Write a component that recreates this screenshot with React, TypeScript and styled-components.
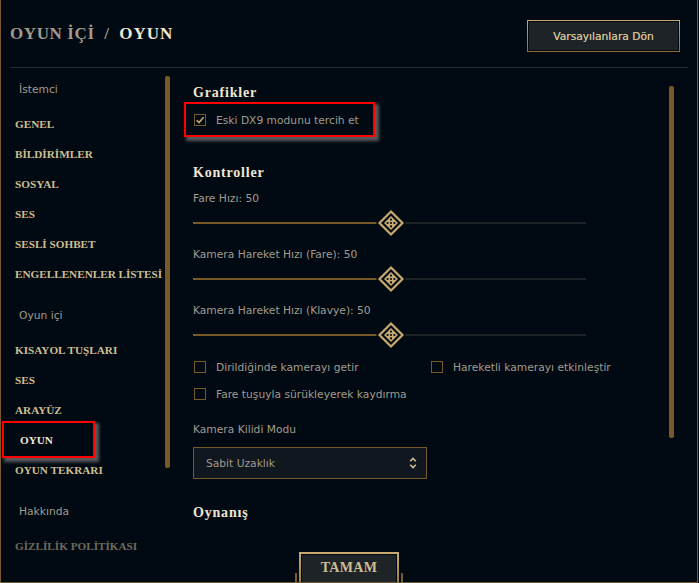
import React from "react";
import styled, { createGlobalStyle } from "styled-components";

const GOLD = "#785a28";
const GOLD_LIGHT = "#c8aa6e";
const BG = "#010a13";
const SERIF = `"Liberation Serif", "DejaVu Serif", serif`;
const SANS = `"DejaVu Sans", "Liberation Sans", sans-serif`;

const Global = createGlobalStyle`
  body {
    margin: 0;
    background: ${BG};
  }
`;

const navGroups = [
  {
    label: "İstemci",
    items: ["GENEL", "BİLDİRİMLER", "SOSYAL", "SES", "SESLİ SOHBET", "ENGELLENENLER LİSTESİ"],
  },
  {
    label: "Oyun içi",
    items: ["KISAYOL TUŞLARI", "SES", "ARAYÜZ", "OYUN", "OYUN TEKRARI"],
  },
  {
    label: "Hakkında",
    items: ["GİZLİLİK POLİTİKASI"],
  },
];

const sliders = [
  { label: "Fare Hızı", value: 50 },
  { label: "Kamera Hareket Hızı (Fare)", value: 50 },
  { label: "Kamera Hareket Hızı (Klavye)", value: 50 },
];

export default function App() {
  return (
    <Frame>
      <Global />
      <Header>
        <Title>
          OYUN İÇİ&nbsp;&nbsp;/&nbsp;&nbsp;<strong>OYUN</strong>
        </Title>
        <DefaultsButton>Varsayılanlara Dön</DefaultsButton>
      </Header>
      <Divider />
      <Body>
        <Nav>
          <NavList>
            {navGroups.map((g) => (
              <NavGroup key={g.label}>
                <GroupLabel>{g.label}</GroupLabel>
                {g.items.map((item) => {
                  const active = g.label === "Oyun içi" && item === "OYUN";
                  return (
                    <NavItem
                      key={item}
                      $active={active}
                      $dim={item === "GİZLİLİK POLİTİKASI"}
                    >
                      {item}
                      {active && <Highlight $left={-13} $top={-4} $w={93} $h={37} />}
                    </NavItem>
                  );
                })}
              </NavGroup>
            ))}
          </NavList>
          <ScrollThumb $top={8} $height={392} />
        </Nav>

        <Content>
          <Main>
            <SectionTitle>Grafikler</SectionTitle>
            <CheckRow style={{ marginTop: 7 }}>
              <Check checked />
              Eski DX9 modunu tercih et
              <Highlight $left={-9} $top={-8} $w={191} $h={35} />
            </CheckRow>

            <SectionTitle style={{ marginTop: 33 }}>Kontroller</SectionTitle>
            {sliders.map((s, i) => (
              <React.Fragment key={s.label}>
                <FieldLabel style={{ marginTop: i === 0 ? 8 : 14 }}>
                  {s.label}: {s.value}
                </FieldLabel>
                <Slider value={s.value} />
              </React.Fragment>
            ))}

            <CheckGrid>
              <CheckRow>
                <Check />
                Dirildiğinde kamerayı getir
              </CheckRow>
              <CheckRow>
                <Check />
                Hareketli kamerayı etkinleştir
              </CheckRow>
              <CheckRow>
                <Check />
                Fare tuşuyla sürükleyerek kaydırma
              </CheckRow>
            </CheckGrid>

            <FieldLabel style={{ marginTop: 18 }}>Kamera Kilidi Modu</FieldLabel>
            <Select>
              Sabit Uzaklık
              <svg width="8" height="14" viewBox="0 0 8 14">
                <path d="M1.2 5.2 L4 2.4 L6.8 5.2" stroke="#cdbe91" strokeWidth="1.6" fill="none" />
                <path d="M1.2 8.8 L4 11.6 L6.8 8.8" stroke="#cdbe91" strokeWidth="1.6" fill="none" />
              </svg>
            </Select>

            <SectionTitle style={{ marginTop: 24 }}>Oynanış</SectionTitle>
          </Main>
          <ScrollThumb $top={18} $height={352} $right={23} />
        </Content>
      </Body>
      <OkButton>TAMAM</OkButton>
    </Frame>
  );
}

function Check({ checked }: { checked?: boolean }) {
  return (
    <Box>
      {checked && (
        <svg width="10" height="10" viewBox="0 0 10 10">
          <path d="M1.6 5.2 L4 7.6 L8.6 2.2" stroke={GOLD_LIGHT} strokeWidth="1.6" fill="none" />
        </svg>
      )}
    </Box>
  );
}

function Slider({ value }: { value: number }) {
  const pct = value / 100;
  const center = Math.round(393 * pct) + 1;
  return (
    <Track style={{ backgroundImage: `linear-gradient(to right, ${GOLD} 0 ${center}px, #1e2328 ${center}px 100%)` }}>
      <Thumb style={{ left: center - 15 }}>
        <svg width="30" height="30" viewBox="0 0 30 30">
          <polygon points="15,0 30,15 15,30 0,15" fill={BG} />
          <polygon points="15,3.5 26.5,15 15,26.5 3.5,15" fill={BG} stroke={GOLD_LIGHT} strokeWidth="2.2" />
          <polygon points="15,8 22,15 15,22 8,15" fill={GOLD_LIGHT} />
          <circle cx="15" cy="11.6" r="1.1" fill={BG} />
          <circle cx="18.4" cy="15" r="1.1" fill={BG} />
          <circle cx="15" cy="18.4" r="1.1" fill={BG} />
          <circle cx="11.6" cy="15" r="1.1" fill={BG} />
          <circle cx="15" cy="15" r="1.1" fill={BG} />
        </svg>
      </Thumb>
    </Track>
  );
}

const Frame = styled.div`
  position: relative;
  width: 698px;
  height: 583px;
  box-sizing: border-box;
  border-left: 1px solid ${GOLD};
  border-right: 1px solid ${GOLD};
  border-bottom: 1px solid ${GOLD};
  background: ${BG};
  overflow: hidden;
  display: flex;
  flex-direction: column;
`;

const Header = styled.header`
  height: 67px;
  flex-shrink: 0;
  display: flex;
  align-items: center;
  justify-content: space-between;
  padding: 0 17px 0 9px;
`;

const Title = styled.h1`
  margin: 0;
  font-family: ${SERIF};
  font-weight: 700;
  font-size: 17px;
  letter-spacing: 0.6px;
  color: #a09b8c;

  strong {
    color: #f0e6d2;
    letter-spacing: 1px;
  }
`;

const DefaultsButton = styled.button`
  margin-top: 5px;
  width: 153px;
  height: 32px;
  box-sizing: border-box;
  border: 1px solid transparent;
  border-image: linear-gradient(${GOLD_LIGHT}, #8a6c36) 1;
  box-shadow: inset 0 0 0 1px ${BG};
  background: #1e2328;
  color: #cdbe91;
  font-family: ${SANS};
  font-size: 10.7px;
  text-shadow: 0 0 0.6px #cdbe91;
  padding: 0;
`;

const Divider = styled.div`
  height: 1px;
  margin: 0 9px;
  background: #252b33;
  flex-shrink: 0;
`;

const Body = styled.div`
  flex: 1;
  display: flex;
  min-height: 0;
`;

const Nav = styled.nav`
  width: 179px;
  flex-shrink: 0;
  display: flex;
`;

const NavList = styled.div`
  width: 150px;
  padding: 7px 0 0 14px;
  display: flex;
  flex-direction: column;
  gap: 12px;
`;

const NavGroup = styled.div`
  display: flex;
  flex-direction: column;
`;

const GroupLabel = styled.div`
  height: 30px;
  line-height: 30px;
  margin-bottom: 4px;
  padding-left: 4px;
  font-family: ${SANS};
  font-size: 10.7px;
  color: #a09b8c;
`;

const NavItem = styled.div<{ $active?: boolean; $dim?: boolean }>`
  position: relative;
  height: 30px;
  line-height: 30px;
  padding-left: ${(p) => (p.$active ? 5 : 0)}px;
  font-family: ${SERIF};
  font-weight: 700;
  font-size: 11.2px;
  white-space: nowrap;
  color: ${(p) => (p.$active ? "#f0e6d2" : p.$dim ? "#6f6a5c" : "#cdbe91")};
`;

const Highlight = styled.div<{ $left: number; $top: number; $w: number; $h: number }>`
  position: absolute;
  left: ${(p) => p.$left}px;
  top: ${(p) => p.$top}px;
  width: ${(p) => p.$w}px;
  height: ${(p) => p.$h}px;
  box-sizing: border-box;
  border: 2px solid #ff0000;
  box-shadow: 3px 3px 3px 1px rgba(105, 105, 105, 0.85);
  pointer-events: none;
`;

const ScrollThumb = styled.div<{ $top: number; $height: number; $right?: number }>`
  width: 5px;
  flex-shrink: 0;
  margin-top: ${(p) => p.$top}px;
  margin-right: ${(p) => p.$right ?? 0}px;
  height: ${(p) => p.$height}px;
  border-radius: 2px;
  background: ${GOLD};
`;

const Content = styled.div`
  flex: 1;
  display: flex;
`;

const Main = styled.main`
  flex: 1;
  padding: 15px 0 0 13px;
  display: flex;
  flex-direction: column;
  align-items: flex-start;
`;

const SectionTitle = styled.h2`
  margin: 0;
  height: 20px;
  line-height: 20px;
  font-family: ${SERIF};
  font-weight: 700;
  font-size: 14px;
  letter-spacing: 0.8px;
  color: #f0e6d2;
`;

const FieldLabel = styled.div`
  height: 16px;
  line-height: 16px;
  font-family: ${SANS};
  font-size: 10.7px;
  color: #a09b8c;
`;

const CheckRow = styled.label`
  position: relative;
  height: 20px;
  display: flex;
  align-items: center;
  gap: 10px;
  padding-left: 1px;
  font-family: ${SANS};
  font-size: 10.7px;
  color: #a09b8c;
  white-space: nowrap;
`;

const Box = styled.span`
  width: 12px;
  height: 12px;
  box-sizing: border-box;
  border: 1px solid ${GOLD};
  display: flex;
  align-items: center;
  justify-content: center;
`;

const CheckGrid = styled.div`
  margin-top: 12px;
  display: grid;
  grid-template-columns: 237px auto;
  row-gap: 7px;
`;

const Track = styled.div`
  position: relative;
  margin-top: 6px;
  width: 393px;
  height: 20px;
  background-repeat: no-repeat;
  background-size: 100% 2px;
  background-position: 0 center;
`;

const Thumb = styled.div`
  position: absolute;
  top: -5px;
  width: 30px;
  height: 30px;
`;

const Select = styled.div`
  margin-top: 9px;
  width: 234px;
  height: 32px;
  box-sizing: border-box;
  border: 1px solid ${GOLD};
  background: #10171e;
  display: flex;
  align-items: center;
  justify-content: space-between;
  padding: 0 9px 0 12px;
  font-family: ${SANS};
  font-size: 10.7px;
  color: #a09b8c;
`;

const OkButton = styled.button`
  position: absolute;
  left: 298px;
  bottom: -1px;
  width: 100px;
  height: 31px;
  box-sizing: border-box;
  padding: 0 0 2px;
  border: 2px solid transparent;
  border-bottom: none;
  border-image: linear-gradient(${GOLD_LIGHT}, #9a7b42) 1;
  box-shadow: inset 0 0 0 1px ${BG};
  background: #1e2328;
  font-family: ${SERIF};
  font-weight: 700;
  font-size: 14px;
  letter-spacing: 0.3px;
  color: #cdbe91;

  &::before,
  &::after {
    content: "";
    position: absolute;
    bottom: 0;
    width: 2px;
    height: 10px;
    background: ${GOLD};
  }
  &::before {
    left: -6px;
  }
  &::after {
    right: -6px;
  }
`;
